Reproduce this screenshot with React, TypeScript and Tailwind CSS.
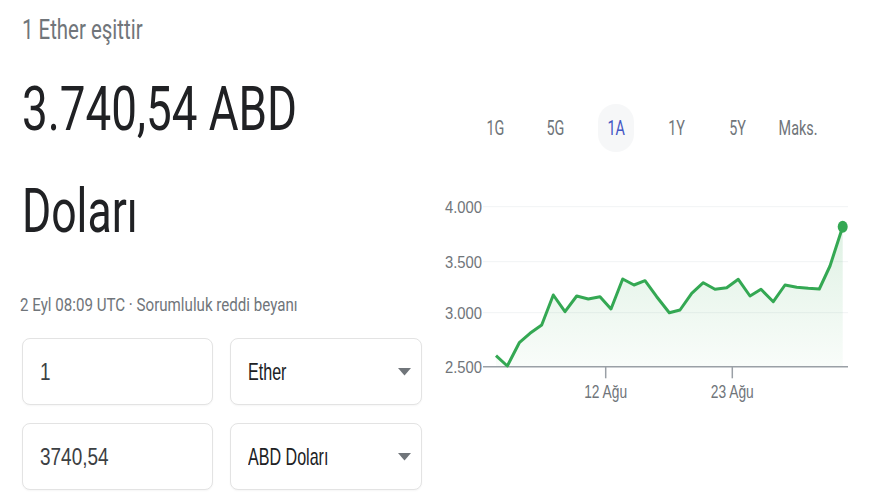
import type { ReactNode } from "react";

const tabs = ["1G", "5G", "1A", "1Y", "5Y", "Maks."];

// chart points, svg coords (svg sits at page x=430, y=190)
const pts: [number, number][] = [
  [66, 165.7], [77.3, 176], [89.3, 152.7], [100, 143.3], [111.7, 135],
  [123.3, 105], [135, 121.7], [146.7, 106], [158.3, 109], [170, 106.7],
  [181, 119], [192.7, 89], [204, 95], [215, 90.7], [226.7, 106.7],
  [239.3, 122.7], [250, 120], [261.7, 103.3], [273.3, 92.7], [285, 99.3],
  [296.7, 97.7], [308.3, 89.3], [320, 106], [331, 99.3], [343.3, 111.7],
  [355, 95], [366.7, 97.3], [378.3, 98.3], [389.3, 99], [400, 76],
  [412.7, 36.7],
];

const grid = [
  { y: 16.7, label: "4.000" },
  { y: 71.7, label: "3.500" },
  { y: 122.7, label: "3.000" },
  { y: 176.7, label: "2.500" },
];

function Chart() {
  const line = pts.map(([x, y]) => `${x},${y}`).join(" ");
  const area = `${pts[0][0]},176.7 ${line} ${pts[pts.length - 1][0]},176.7`;
  const last = pts[pts.length - 1];

  return (
    <svg width="450" height="220" viewBox="0 0 450 220" className="block">
      <defs>
        <linearGradient id="fill" x1="0" y1="0" x2="0" y2="1">
          <stop offset="0%" stopColor="#34a853" stopOpacity="0.16" />
          <stop offset="100%" stopColor="#34a853" stopOpacity="0.03" />
        </linearGradient>
      </defs>
      {grid.slice(0, 3).map((g) => (
        <line key={g.label} x1="53" x2="418" y1={g.y} y2={g.y} stroke="#f1f3f4" strokeWidth="1" />
      ))}
      {grid.map((g) => (
        <text
          key={g.label}
          x="52"
          y={g.y + 6}
          textAnchor="end"
          fontSize="17"
          fill="#70757a"
          textLength="37"
          lengthAdjust="spacingAndGlyphs"
          fontFamily="'Liberation Sans', Arial, sans-serif"
        >
          {g.label}
        </text>
      ))}
      <polygon points={area} fill="url(#fill)" />
      <line x1="53" x2="418" y1="176.7" y2="176.7" stroke="#9aa0a6" strokeWidth="1.5" />
      <line x1="175.7" x2="175.7" y1="176.7" y2="188.3" stroke="#9aa0a6" strokeWidth="1.5" />
      <line x1="302.3" x2="302.3" y1="176.7" y2="188.3" stroke="#9aa0a6" strokeWidth="1.5" />
      <text
        x="175.7"
        y="208"
        textAnchor="middle"
        fontSize="18"
        fill="#70757a"
        textLength="43"
        lengthAdjust="spacingAndGlyphs"
        fontFamily="'Liberation Sans', Arial, sans-serif"
      >
        12 Ağu
      </text>
      <text
        x="302.3"
        y="208"
        textAnchor="middle"
        fontSize="18"
        fill="#70757a"
        textLength="43"
        lengthAdjust="spacingAndGlyphs"
        fontFamily="'Liberation Sans', Arial, sans-serif"
      >
        23 Ağu
      </text>
      <polyline points={line} fill="none" stroke="#34a853" strokeWidth="3" strokeLinejoin="round" />
      <ellipse cx={last[0]} cy={last[1]} rx="5" ry="6" fill="#34a853" />
    </svg>
  );
}

function Caret() {
  return (
    <svg width="13" height="8" viewBox="0 0 13 8" className="shrink-0">
      <path d="M0 0 H13 L6.5 7.5 Z" fill="#70757a" />
    </svg>
  );
}

function Box({ children, select }: { children: ReactNode; select?: boolean }) {
  return (
    <div className="h-[67px] rounded-[8px] border border-[#e3e3e3] shadow-[0_1px_2px_rgba(0,0,0,0.04)] bg-white flex items-center justify-between pl-[17px] pr-[10px]">
      <span
        className={
          select
            ? "inline-block origin-left scale-x-[0.67] whitespace-nowrap text-[24px] leading-[24px] text-[#202124] font-['Liberation_Sans',Arial,sans-serif]"
            : "inline-block origin-left scale-x-[0.79] whitespace-nowrap text-[24px] leading-[24px] text-[#3c4043] font-['Liberation_Sans',Arial,sans-serif]"
        }
      >
        {children}
      </span>
      {select && <Caret />}
    </div>
  );
}

export default function App() {
  return (
    <div className="w-[880px] h-[495px] bg-white overflow-hidden flex font-[Roboto,sans-serif]">
      <div className="w-[430px] shrink-0 pl-[22px] pt-[16px]">
        <div className="h-[28px]">
          <span className="inline-block origin-left scale-x-[0.73] whitespace-nowrap text-[28px] leading-[28px] text-[#70757a]">
            1 Ether eşittir
          </span>
        </div>
        <div className="mt-[14px] text-[61px] leading-[102px] text-[#202124]">
          <span className="block origin-left scale-x-[0.75] whitespace-nowrap">3.740,54 ABD</span>
          <span className="block origin-left scale-x-[0.73] whitespace-nowrap">Doları</span>
        </div>
        <div className="mt-[32px] h-[18px] -ml-[2px]">
          <span className="inline-block origin-left scale-x-[0.84] whitespace-nowrap text-[18px] leading-[18px] text-[#70757a]">
            2 Eyl 08:09 UTC · Sorumluluk reddi beyanı
          </span>
        </div>
        <div className="mt-[26px] grid grid-cols-[191px_192px] gap-x-[17px] gap-y-[18px]">
          <Box>1</Box>
          <Box select>Ether</Box>
          <Box>3740,54</Box>
          <Box select>ABD Doları</Box>
        </div>
      </div>
      <div className="flex-1 pt-[104px]">
        <div className="flex h-[48px] pl-[35px]">
          {tabs.map((t) => (
            <div key={t} className="w-[60.5px] flex items-center justify-center">
              <div
                className={
                  t === "1A"
                    ? "w-[36px] h-[48px] rounded-full bg-[#f6f7f8] flex items-center justify-center"
                    : "flex items-center justify-center"
                }
              >
                <span
                  className={
                    t === "1A"
                      ? "inline-block scale-x-[0.72] whitespace-nowrap text-[20px] leading-[20px] text-[#4356c4]"
                      : "inline-block scale-x-[0.72] whitespace-nowrap text-[20px] leading-[20px] text-[#70757a]"
                  }
                >
                  {t}
                </span>
              </div>
            </div>
          ))}
        </div>
        <div className="mt-[38px]">
          <Chart />
        </div>
      </div>
    </div>
  );
}
